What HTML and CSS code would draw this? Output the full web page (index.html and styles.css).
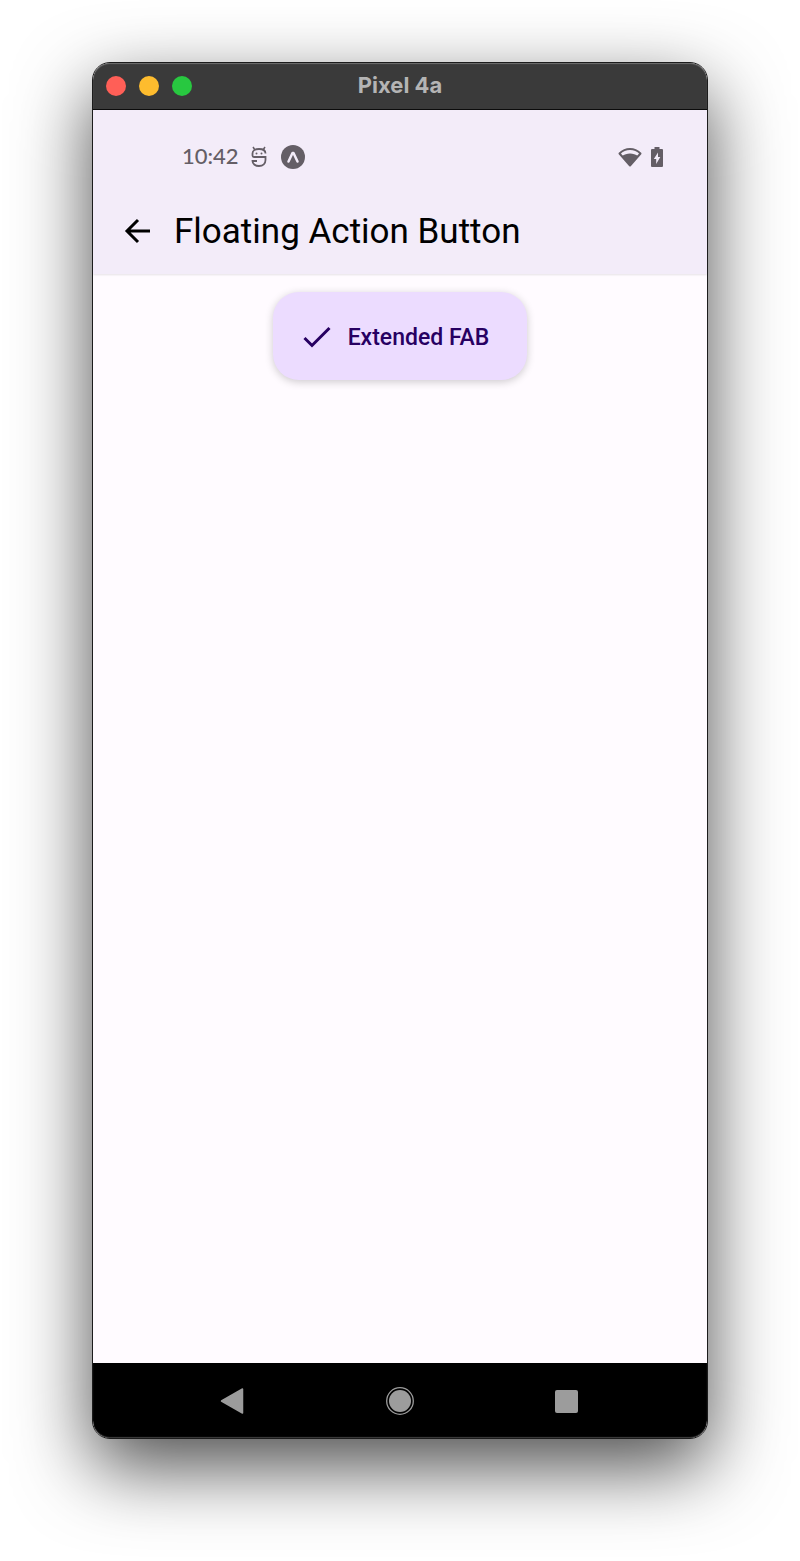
FILE: index.html
```html
<!DOCTYPE html>
<html lang="en">
<head>
  <meta charset="UTF-8">
  <meta name="viewport" content="width=device-width, initial-scale=1">
  <title>Pixel 4a</title>
  <link rel="stylesheet" href="styles.css">
</head>
<body>
  <div class="window">
    <div class="title-bar">
      <div class="window-controls">
        <button class="dot close" aria-label="Close"></button>
        <button class="dot minimize" aria-label="Minimize"></button>
        <button class="dot zoom" aria-label="Zoom"></button>
      </div>
      <div class="window-title">Pixel 4a</div>
    </div>

    <header class="app-header">
      <div class="status-bar">
        <span class="time">10:42</span>
        <svg class="debug-icon" width="16" height="22" viewBox="0 0 16 22" fill="none" stroke="currentColor" stroke-width="1.800">
          <path d="M14.500 7.500C14.500 4.500 12 3 8 3S1.500 4.500 1.500 7.500v2c0 1 .5 1.500 1.500 1.500h11.500v3c0 3.500-2.500 6-6.500 6s-6.500-2.500-6.500-5H6"/>
          <path d="M2 1l2 3M14 1l-2 3" stroke-width="1.500"/>
          <circle cx="5.500" cy="7.500" r="1" fill="currentColor" stroke="none"/>
          <circle cx="10.500" cy="7.500" r="1" fill="currentColor" stroke="none"/>
        </svg>
        <svg class="expo-icon" width="24" height="24" viewBox="0 0 24 24">
          <circle cx="12" cy="12" r="12" fill="currentColor"/>
          <path d="M7.500 16.500L11.500 8h1l4 8.500" fill="none" stroke="#f3ecf9" stroke-width="2.500" stroke-linecap="round" stroke-linejoin="round"/>
        </svg>
        <div class="status-right">
          <svg width="24" height="20" viewBox="0 0 24 20">
            <path d="M1.500 6.500C7.500 .5 16.500 .5 22.500 6.500L12 18.500z" fill="none" stroke="currentColor" stroke-width="2" stroke-linejoin="round"/>
            <path d="M4 9C8.500 5.500 15.500 5.500 20 9L12 18.500z" fill="currentColor"/>
          </svg>
          <svg width="12" height="20" viewBox="0 0 12 20">
            <path fill="currentColor" fill-rule="evenodd" d="M3.500 0h5v2H11a1 1 0 0 1 1 1v16a1 1 0 0 1-1 1H1a1 1 0 0 1-1-1V3a1 1 0 0 1 1-1h2.500zM7 5.500L2.800 12H5.200v5L9.300 10H7z"/>
          </svg>
        </div>
      </div>

      <div class="app-bar">
        <button class="back" aria-label="Back">
          <svg width="26" height="26" viewBox="0 0 26 26" fill="none" stroke="currentColor" stroke-width="3">
            <path d="M26 13H3M14 2L3 13l11 11"/>
          </svg>
        </button>
        <h1>Floating Action Button</h1>
      </div>
    </header>

    <main class="content">
      <button class="fab">
        <svg width="28" height="22" viewBox="0 0 28 22" fill="none" stroke="currentColor" stroke-width="3">
          <path d="M1.500 12L9 19.500L26.500 2"/>
        </svg>
        <span>Extended FAB</span>
      </button>
    </main>

    <nav class="nav-bar">
      <button aria-label="Back">
        <svg width="28" height="28" viewBox="0 0 28 28">
          <path d="M23.500 2v24L2.500 14z" fill="#9c9c9c" stroke="#9c9c9c" stroke-width="1.500" stroke-linejoin="round"/>
        </svg>
      </button>
      <button aria-label="Home">
        <svg width="28" height="28" viewBox="0 0 28 28">
          <circle cx="14" cy="14" r="13.300" fill="none" stroke="#9c9c9c" stroke-width="1.300"/>
          <circle cx="14" cy="14" r="11" fill="#9c9c9c"/>
        </svg>
      </button>
      <button aria-label="Recent apps">
        <svg width="28" height="28" viewBox="0 0 28 28">
          <rect x="2" y="3" width="23" height="23" rx="2" fill="#9c9c9c"/>
        </svg>
      </button>
    </nav>
  </div>
</body>
</html>
```

FILE: styles.css
```css
* {
  box-sizing: border-box;
}

body {
  margin: 0;
  min-height: 100vh;
  padding: 62px 92px 122px;
  display: flex;
  background: #ffffff;
  font-family: Roboto, sans-serif;
}

button {
  border: none;
  padding: 0;
  background: none;
  font-family: inherit;
  cursor: pointer;
}

svg {
  display: block;
}

.window {
  flex: 1;
  display: flex;
  flex-direction: column;
  border: 1px solid #1c1c1c;
  border-radius: 18px;
  overflow: hidden;
  background: #fffbff;
  box-shadow: 0 28px 76px rgba(0, 0, 0, 0.7);
}

.title-bar {
  display: grid;
  grid-template-columns: 1fr auto 1fr;
  align-items: center;
  height: 47px;
  padding: 0 13px;
  background: #3a3a3a;
  border-bottom: 1px solid #0c0c0c;
  box-shadow: inset 0 1px 1px #707070;
  border-radius: 17px 17px 0 0;
}

.window-controls {
  display: flex;
  gap: 13px;
}

.dot {
  width: 20px;
  height: 20px;
  border-radius: 50%;
}

.close {
  background: #ff5f57;
}

.minimize {
  background: #febc2e;
}

.zoom {
  background: #28c840;
}

.window-title {
  color: #b4b4b4;
  font-family: Inter, sans-serif;
  font-size: 22px;
  font-weight: 700;
  line-height: 24px;
  padding-bottom: 2px;
}

.app-header {
  background: #f3ecf9;
  box-shadow: 0 1px 2px rgba(0, 0, 0, 0.1);
}

.status-bar {
  display: flex;
  align-items: center;
  height: 93px;
  padding: 0 44px 0 89px;
  color: #645e66;
}

.time {
  font-family: Lato, sans-serif;
  font-size: 22px;
  font-weight: 500;
  line-height: 24px;
  padding-bottom: 2px;
}

.debug-icon {
  margin-left: 12px;
}

.expo-icon {
  margin-left: 14px;
}

.status-right {
  display: flex;
  align-items: center;
  gap: 9px;
  margin-left: auto;
}

.app-bar {
  display: flex;
  align-items: center;
  gap: 24px;
  height: 71px;
  padding: 0 31px 16px;
}

.back {
  color: #000000;
}

h1 {
  margin: 0;
  padding-top: 2px;
  font-size: 35px;
  font-weight: 400;
  line-height: 40px;
  color: #000000;
}

.content {
  flex: 1;
  display: flex;
  justify-content: center;
  align-items: flex-start;
  padding-top: 18px;
}

.fab {
  display: flex;
  align-items: center;
  gap: 17px;
  height: 88px;
  padding: 2px 38px 0 30px;
  border-radius: 26px;
  background: #ecdcff;
  color: #270062;
  font-size: 23px;
  font-weight: 500;
  box-shadow: 0 2px 8px rgba(0, 0, 0, 0.2);
}

.nav-bar {
  display: flex;
  justify-content: center;
  align-items: center;
  gap: 139px;
  height: 75px;
  background: #000000;
  border-radius: 0 0 17px 17px;
  box-shadow: inset 0 -1px 1px #404040;
}
```
